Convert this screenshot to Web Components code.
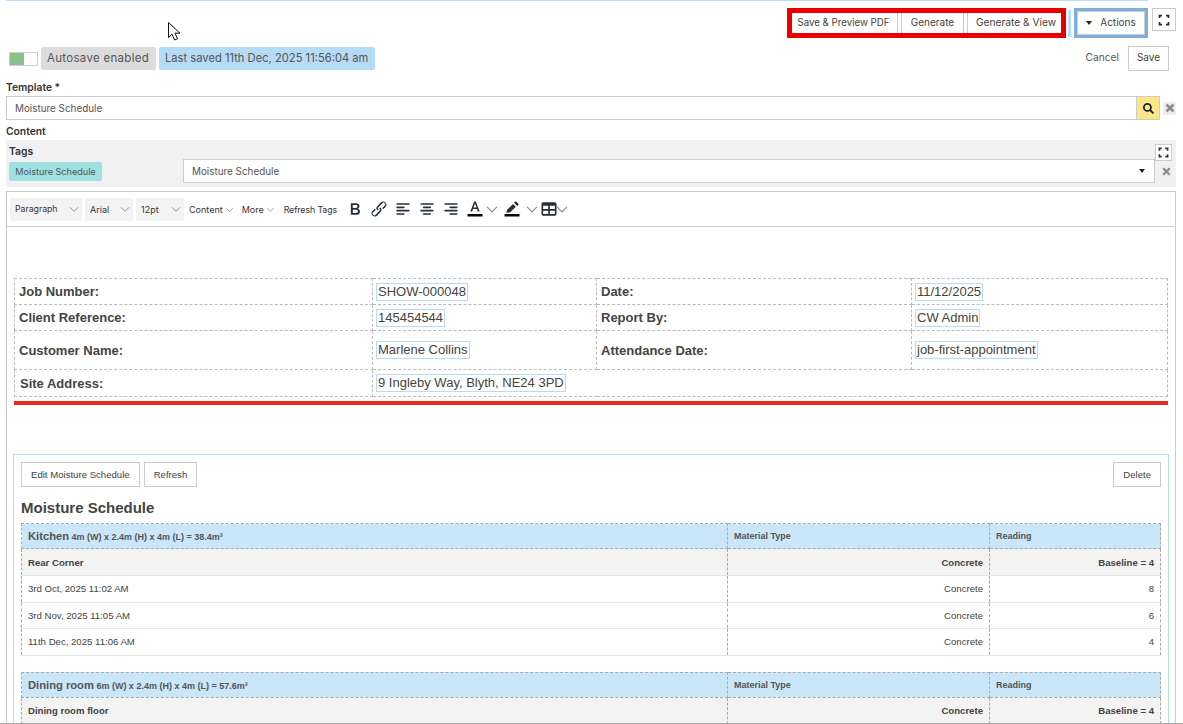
<!DOCTYPE html>
<html>
<head>
<meta charset="utf-8">
<style>
html, body { margin: 0; padding: 0; background: #fff; overflow: hidden; }
body { font-family: Inter, "Open Sans", sans-serif; color: #444; }
</style>
</head>
<body>
<job-form></job-form>

<script>
const icons = {
   full: '<path d="M3 8V3h5M16 3h5v5M21 16v5h-5M8 21H3v-5" fill="none" stroke="#22303f" stroke-width="3.5"/>',
   chevron: '<path d="M6 9.5l6 6 6-6" fill="none" stroke="#8a9096" stroke-width="1.5"/>',
   close: '<path d="M5 5l14 14M19 5L5 19" fill="none" stroke="#848d96" stroke-width="5"/>',
   search: '<circle cx="10" cy="10" r="6.5" fill="none" stroke="#17222d" stroke-width="3.2"/><path d="M15 15l6 6" stroke="#17222d" stroke-width="3.6"/>',
   bold: '<path d="M7.8 19c-.3 0-.5 0-.6-.2l-.2-.5V5.7c0-.2 0-.4.2-.5l.6-.2h5c1.5 0 2.7.3 3.5 1 .7.6 1.1 1.4 1.1 2.5a3 3 0 0 1-.6 1.9c-.4.6-1 1-1.6 1.2.4.1.9.3 1.3.6s.8.7 1 1.2c.4.4.5 1 .5 1.6 0 1.3-.4 2.3-1.3 3-.8.7-2.1 1-3.8 1H7.8zm5-8.3c.6 0 1.2-.1 1.6-.5.4-.3.6-.7.6-1.3 0-1.1-.8-1.7-2.3-1.7H9.3v3.5h3.4zm.5 6c.7 0 1.3-.1 1.7-.4.4-.4.6-.9.6-1.5s-.2-1-.7-1.4c-.4-.3-1-.4-2-.4H9.4v3.8h4z"/>',
   link: '<path d="M6.2 12.3a1 1 0 0 1 1.4 1.4l-2 2a2 2 0 1 0 2.6 2.8l4.8-4.8a1 1 0 0 0 0-1.4 1 1 0 1 1 1.4-1.3 2.9 2.9 0 0 1 0 4L9.6 20a3.9 3.9 0 0 1-5.5-5.5l2-2zm11.6-.6a1 1 0 0 1-1.4-1.4l2-2a2 2 0 1 0-2.6-2.8L11 10.3a1 1 0 0 0 0 1.4A1 1 0 1 1 9.6 13a2.9 2.9 0 0 1 0-4L14.4 4a3.9 3.9 0 0 1 5.5 5.5l-2 2z"/>',
   left: '<path d="M5 5h14c.6 0 1 .4 1 1s-.4 1-1 1H5a1 1 0 1 1 0-2zm0 4h8c.6 0 1 .4 1 1s-.4 1-1 1H5a1 1 0 1 1 0-2zm0 8h8c.6 0 1 .4 1 1s-.4 1-1 1H5a1 1 0 0 1 0-2zm0-4h14c.6 0 1 .4 1 1s-.4 1-1 1H5a1 1 0 0 1 0-2z"/>',
   center: '<path d="M5 5h14c.6 0 1 .4 1 1s-.4 1-1 1H5a1 1 0 1 1 0-2zm3 4h8c.6 0 1 .4 1 1s-.4 1-1 1H8a1 1 0 1 1 0-2zm0 8h8c.6 0 1 .4 1 1s-.4 1-1 1H8a1 1 0 0 1 0-2zm-3-4h14c.6 0 1 .4 1 1s-.4 1-1 1H5a1 1 0 0 1 0-2z"/>',
   right: '<path d="M5 5h14c.6 0 1 .4 1 1s-.4 1-1 1H5a1 1 0 1 1 0-2zm6 4h8c.6 0 1 .4 1 1s-.4 1-1 1h-8a1 1 0 0 1 0-2zm0 8h8c.6 0 1 .4 1 1s-.4 1-1 1h-8a1 1 0 0 1 0-2zm-6-4h14c.6 0 1 .4 1 1s-.4 1-1 1H5a1 1 0 0 1 0-2z"/>',
   color: '<path d="M3 18h18v3H3z" fill="#000"/><path d="M11 3h2l4.6 12h-2.2l-1-3H9.6l-1 3H6.4L11 3zm-.8 7.2h3.6L12 5.4l-1.8 4.8z"/>',
   marker: '<path d="M3 18h18v3H3z" fill="#000"/><path d="M5 16.5l1.2-3.6 7-7 3.4 3.4-7 7L5 16.5zM14.4 4.6l1.3-1.3c.5-.5 1.1-.5 1.6 0l2.3 2.3c.5.5.5 1.1 0 1.6l-1.3 1.3-3.9-3.9z"/>',
   table: '<path d="M19 4a2 2 0 0 1 2 2v12a2 2 0 0 1-2 2H5a2 2 0 0 1-2-2V6c0-1.1.9-2 2-2h14zm0 10h-6v4h6v-4zM11 14H5v4h6v-4zm8-6h-6v4h6V8zm-8 0H5v4h6V8z"/>'
};

function svg(name, size, fill) {
   return `<svg width="${size}" height="${size}" viewBox="0 0 24 24" fill="${fill || '#222f3e'}" style="display:block;flex:none">${icons[name]}</svg>`;
}

class UiButton extends HTMLElement {
   constructor() {
      super();
      this.attachShadow({ mode: 'open' }).innerHTML = `
      <style>
      :host { display: inline-flex; align-items: center; justify-content: center; box-sizing: border-box;
         height: 25px; padding: 0 9px; background: #fff; border: 1px solid #ccc; white-space: nowrap;
         font-size: 10px; color: #444; }
      </style><slot></slot>`;
   }
}
customElements.define('ui-button', UiButton);

class IconButton extends HTMLElement {
   constructor() {
      super();
      const size = this.getAttribute('size') || 12;
      this.attachShadow({ mode: 'open' }).innerHTML = `
      <style>
      :host { display: flex; align-items: center; justify-content: center; box-sizing: border-box; flex: none; }
      </style>${svg(this.getAttribute('icon'), size)}`;
   }
}
customElements.define('icon-button', IconButton);

class TopActions extends HTMLElement {
   constructor() {
      super();
      this.attachShadow({ mode: 'open' }).innerHTML = `
      <style>
      :host { display: flex; justify-content: flex-end; align-items: flex-start; height: 30px; margin-top: 7px; padding-right: 7px; }
      .group { display: flex; gap: 3px; border: 5px solid #e80000; height: 20px; background: #fff; }
      .group ui-button { height: 20px; padding: 0 0 2px; border-width: 0 1px; }
      .save { width: 106px; border-left: 0 !important; padding-right: 2px !important; font-size: 9.7px; }
      .gen { width: 63px; }
      .view { width: 94px; border-right: 0 !important; padding-left: 3px !important; font-size: 10.2px; }
      .sep { width: 3px; height: 27px; margin: 2px 3px 0 2px; background: #b9def7; }
      .actions { box-sizing: border-box; width: 74px; height: 30px; border: 3px solid #7eaedd; display: flex; }
      .actions ui-button { flex: 1; height: 24px; padding: 0 0 2px; gap: 8px; }
      .caret { width: 0; height: 0; margin-top: 2px; border: 3.5px solid transparent; border-top: 4px solid #222; border-bottom: 0; }
      .full { width: 24px; height: 23px; margin-left: 4px; border: 1px solid #ccc; }
      </style>
      <div class="group">
         <ui-button class="save">Save &amp; Preview PDF</ui-button><ui-button class="gen">Generate</ui-button><ui-button class="view">Generate &amp; View</ui-button>
      </div>
      <div class="sep"></div>
      <div class="actions"><ui-button><span class="caret"></span>Actions</ui-button></div>
      <icon-button class="full" icon="full" size="12"></icon-button>`;
   }
}
customElements.define('top-actions', TopActions);

class AutosaveBar extends HTMLElement {
   constructor() {
      super();
      this.attachShadow({ mode: 'open' }).innerHTML = `
      <style>
      :host { display: flex; align-items: center; height: 25px; margin-top: 8px; padding: 0 14px 0 9px; font-size: 11.2px; }
      .toggle { box-sizing: border-box; width: 29px; height: 14px; border: 1px solid #ccc; display: flex; background: #fff; }
      .toggle i { width: 14px; background: #8bc18b; }
      .chip { box-sizing: border-box; height: 23px; display: flex; align-items: center; border-radius: 2px; margin-left: 3px; padding: 0 0 2px 6px; color: #555; white-space: nowrap; }
      .auto { background: #dcdcdc; width: 115px; font-size: 11.5px; letter-spacing: .3px; }
      .saved { background: #b5dbf5; width: 216px; }
      .cancel { margin-left: auto; margin-right: 9px; padding-bottom: 3px; font-size: 10.2px; color: #555; }
      .save { width: 41px; padding: 0 0 3px; }
      </style>
      <div class="toggle"><i></i></div>
      <div class="chip auto">Autosave enabled</div>
      <div class="chip saved">Last saved 11th Dec, 2025 11:56:04 am</div>
      <span class="cancel">Cancel</span>
      <ui-button class="save">Save</ui-button>`;
   }
}
customElements.define('autosave-bar', AutosaveBar);

class FieldLabel extends HTMLElement {
   constructor() {
      super();
      this.attachShadow({ mode: 'open' }).innerHTML = `
      <style>
      :host { display: flex; align-items: flex-end; box-sizing: border-box; margin-left: 6px; font-size: 10.3px; font-weight: 600; color: #333; }
      </style><slot></slot>`;
   }
}
customElements.define('field-label', FieldLabel);

class TemplateLookup extends HTMLElement {
   constructor() {
      super();
      this.attachShadow({ mode: 'open' }).innerHTML = `
      <style>
      :host { display: flex; align-items: center; height: 24px; margin-left: 6px; padding-right: 7px; font-size: 9.9px; color: #555; }
      .input { box-sizing: border-box; flex: 1; height: 24px; border: 1px solid #ccc; border-right: 0; display: flex; align-items: center; padding: 0 0 1px 8px; }
      .search { box-sizing: border-box; width: 24px; height: 24px; background: #fde68a; border: 1px solid #ccc; }
      .x { width: 13px; height: 13px; margin-left: 3px; background: #eee; }
      </style>
      <div class="input"><slot></slot></div>
      <icon-button class="search" icon="search" size="13"></icon-button>
      <icon-button class="x" icon="close" size="12"></icon-button>`;
   }
}
customElements.define('template-lookup', TemplateLookup);

class TagsPanel extends HTMLElement {
   constructor() {
      super();
      this.attachShadow({ mode: 'open' }).innerHTML = `
      <style>
      :host { display: block; box-sizing: border-box; height: 47px; margin: 0 7px 4px 6px; padding: 4px 4px 0 3px; background: #f1f1f1; font-size: 9.9px; color: #555; }
      .head { display: flex; justify-content: space-between; height: 15px; align-items: flex-start; }
      .head b { font-weight: 600; font-size: 10.3px; color: #333; line-height: 13px; margin-top: 1px; }
      .full { width: 17px; height: 17px; background: #fff; border: 1px solid #ccc; }
      .row { display: flex; align-items: center; height: 24px; }
      .chip { width: 93px; height: 19px; background: #9fe0e0; border-radius: 2px; display: flex; align-items: center; justify-content: center; font-size: 9.1px; white-space: nowrap; }
      .select { box-sizing: border-box; width: 972px; height: 24px; margin-left: 81px; background: #fff; border: 1px solid #ccc; display: flex; align-items: center; justify-content: space-between; padding: 0 9px 0 8px; }
      .caret { width: 0; height: 0; border: 3.5px solid transparent; border-top: 4px solid #222; border-bottom: 0; }
      .x { width: 12px; height: 12px; margin-left: 5px; background: #eee; }
      </style>
      <div class="head"><b>Tags</b><icon-button class="full" icon="full" size="11"></icon-button></div>
      <div class="row">
         <div class="chip"><slot></slot></div>
         <div class="select"><slot name="value"></slot><span class="caret"></span></div>
         <icon-button class="x" icon="close" size="11"></icon-button>
      </div>`;
   }
}
customElements.define('tags-panel', TagsPanel);

class EditorToolbar extends HTMLElement {
   constructor() {
      super();
      const drop = (label, width, gap, size) => `<div class="drop" style="width:${width}px;margin-right:${gap}px;font-size:${size}px"><span>${label}</span>${svg('chevron', 16)}</div>`;
      const menu = (label, gap) => `<div class="menu" style="margin-right:${gap}px">${label}${svg('chevron', 13)}</div>`;
      const tool = (name, gap) => `<span class="tool" style="margin-right:${gap}px">${svg(name, 20)}</span>`;
      const chev = (before, after) => `<span class="tool" style="margin:0 ${after}px 0 ${before}px">${svg('chevron', 20)}</span>`;
      this.attachShadow({ mode: 'open' }).innerHTML = `
      <style>
      :host { display: flex; align-items: center; box-sizing: border-box; height: 35px; padding-left: 3px; border-bottom: 1px solid #ccc; font-size: 9px; color: #333; }
      .drop { box-sizing: border-box; height: 23px; background: #f3f3f3; border-radius: 2px; display: flex; align-items: center; justify-content: space-between; padding: 0 0 0 5px; }
      .menu { display: flex; align-items: center; white-space: nowrap; }
      .tool { display: flex; flex: none; }
      .tags { margin-right: 8px; margin-left: 1px; white-space: nowrap; letter-spacing: -.1px; font-size: 8.8px; }
      </style>
      ${drop('Paragraph', 72, 3, 8.7)}${drop('Arial', 48, 3, 9)}${drop('12pt', 48, 5, 9)}
      ${menu('Content', 6)}${menu('More', 6)}
      <span class="tags">Refresh Tags</span>
      ${tool('bold', 4)}${tool('link', 4)}${tool('left', 4)}${tool('center', 4)}${tool('right', 4)}
      ${tool('color', 0)}${chev(-3, 0)}
      ${tool('marker', 0)}${chev(0, -3)}
      ${tool('table', 0)}${chev(-7, 0)}`;
   }
}
customElements.define('editor-toolbar', EditorToolbar);

class JobDetails extends HTMLElement {
   constructor() {
      super();
      const field = v => `<span class="field">${v}</span>`;
      this.attachShadow({ mode: 'open' }).innerHTML = `
      <style>
      :host { display: block; margin: 51px 7px 0 7px; font: 13px "Liberation Sans", Arial, sans-serif; color: #444; }
      table { border-collapse: collapse; table-layout: fixed; width: 1154px; }
      td { border: 1px dashed #bbb; padding: 0 4px; height: 25px; box-sizing: border-box; }
      td.b { font-weight: bold; }
      td.site { padding-left: 5px; }
      .field { border: 1px solid #b5dbf5; padding: 0 1px; margin-left: -1px; display: inline-block; line-height: 16px; }
      .line { height: 4px; background: #f0281e; margin-top: 4px; width: 1154px; }
      </style>
      <table>
      <colgroup><col style="width:358px"><col style="width:224px"><col style="width:315px"><col></colgroup>
      <tr style="height:26px"><td class="b">Job Number:</td><td>${field('SHOW-000048')}</td><td class="b">Date:</td><td>${field('11/12/2025')}</td></tr>
      <tr style="height:26px"><td class="b">Client Reference:</td><td>${field('145454544')}</td><td class="b">Report By:</td><td>${field('CW Admin')}</td></tr>
      <tr style="height:39px"><td class="b">Customer Name:</td><td>${field('Marlene Collins')}</td><td class="b">Attendance Date:</td><td>${field('job-first-appointment')}</td></tr>
      <tr style="height:27px"><td class="b site">Site Address:</td><td colspan="3">${field('9 Ingleby Way, Blyth, NE24 3PD')}</td></tr>
      </table>
      <div class="line"></div>`;
   }
}
customElements.define('job-details', JobDetails);

class MoistureRoom extends HTMLElement {
   constructor() {
      super();
      const rows = (this.getAttribute('readings') || '').split(';').filter(Boolean).map(r => {
         const [when, material, reading] = r.split('|');
         return `<tr class="r"><td>${when}</td><td class="n">${material}</td><td class="n">${reading}</td></tr>`;
      }).join('');
      this.attachShadow({ mode: 'open' }).innerHTML = `
      <style>
      :host { display: block; margin-bottom: 16px; font: 9.6px "Liberation Sans", Arial, sans-serif; color: #444; }
      table { border-collapse: collapse; table-layout: fixed; width: 1140px; }
      td { box-sizing: border-box; padding: 0 6px; border-left: 1px dashed #aaa; border-right: 1px dashed #aaa; }
      .h td { height: 25px; background: #cae6f9; border-top: 1px dashed #aaa; border-bottom: 1px dashed #aaa; font-weight: bold; font-size: 9px; color: #555; }
      .h b { font-size: 11.2px; }
      .l td { height: 27px; background: #f3f3f3; font-weight: bold; border-bottom: 1px solid #e6e6e6; }
      .r td { height: 26.5px; border-bottom: 1px solid #e6e6e6; }
      .n { text-align: right; }
      </style>
      <table>
      <colgroup><col style="width:706px"><col style="width:262px"><col></colgroup>
      <tr class="h"><td><b>${this.getAttribute('name')}</b> ${this.getAttribute('dims')}</td><td>Material Type</td><td>Reading</td></tr>
      <tr class="l"><td>${this.getAttribute('location')}</td><td class="n">Concrete</td><td class="n">${this.getAttribute('baseline')}</td></tr>
      ${rows}
      </table>`;
   }
}
customElements.define('moisture-room', MoistureRoom);

class MoisturePanel extends HTMLElement {
   constructor() {
      super();
      this.attachShadow({ mode: 'open' }).innerHTML = `
      <style>
      :host { display: block; margin: 49px 6px 0 6px; padding: 7px; border: 1px solid #b5dbf5; font-family: "Liberation Sans", Arial, sans-serif; color: #444; }
      .bar { display: flex; gap: 4px; }
      .bar ui-button { font-size: 9.6px; padding: 0 9px; }
      .bar ui-button:last-child { margin-left: auto; }
      h2 { margin: 13px 0 7px; font-size: 15px; line-height: 16px; font-weight: bold; color: #444; }
      </style>
      <div class="bar"><ui-button>Edit Moisture Schedule</ui-button><ui-button>Refresh</ui-button><ui-button>Delete</ui-button></div>
      <h2>Moisture Schedule</h2>
      <slot></slot>`;
   }
}
customElements.define('moisture-panel', MoisturePanel);

class RichEditor extends HTMLElement {
   constructor() {
      super();
      this.attachShadow({ mode: 'open' }).innerHTML = `
      <style>
      :host { display: block; margin: 0 7px 0 6px; border: 1px solid #ccc; border-bottom: 0; height: 532px; overflow: hidden; }
      </style>
      <editor-toolbar></editor-toolbar>
      <slot></slot>`;
   }
}
customElements.define('rich-editor', RichEditor);

class JobForm extends HTMLElement {
   constructor() {
      super();
      this.attachShadow({ mode: 'open' }).innerHTML = `
      <style>
      :host { display: block; position: relative; box-sizing: border-box; width: 1183px; height: 724px; overflow: hidden; border-bottom: 1px solid #aaa; }
      .topline { height: 1px; width: 1142px; margin-left: 6px; background: #b9def7; }
      .cursor { position: absolute; left: 168px; top: 22px; }
      </style>
      <div class="topline"></div>
      <top-actions></top-actions>
      <autosave-bar></autosave-bar>
      <field-label style="height:25px;padding-bottom:3px">Template *</field-label>
      <template-lookup>Moisture Schedule</template-lookup>
      <field-label style="height:20px;padding-bottom:3px">Content</field-label>
      <tags-panel>Moisture Schedule<span slot="value">Moisture Schedule</span></tags-panel>
      <rich-editor>
         <job-details></job-details>
         <moisture-panel>
            <moisture-room name="Kitchen" dims="4m (W) x 2.4m (H) x 4m (L) = 38.4m³" location="Rear Corner" baseline="Baseline = 4"
               readings="3rd Oct, 2025 11:02 AM|Concrete|8;3rd Nov, 2025 11:05 AM|Concrete|6;11th Dec, 2025 11:06 AM|Concrete|4"></moisture-room>
            <moisture-room name="Dining room" dims="6m (W) x 2.4m (H) x 4m (L) = 57.6m³" location="Dining room floor" baseline="Baseline = 4"></moisture-room>
         </moisture-panel>
      </rich-editor>
      <svg class="cursor" width="13" height="19" viewBox="0 0 13 19"><path d="M.5.5v15l3.6-3.3 2.4 5.8 3-1.2-2.5-5.6h5L.5.5z" fill="#fff" stroke="#111"/></svg>`;
   }
}
customElements.define('job-form', JobForm);
</script>
</body>
</html>
